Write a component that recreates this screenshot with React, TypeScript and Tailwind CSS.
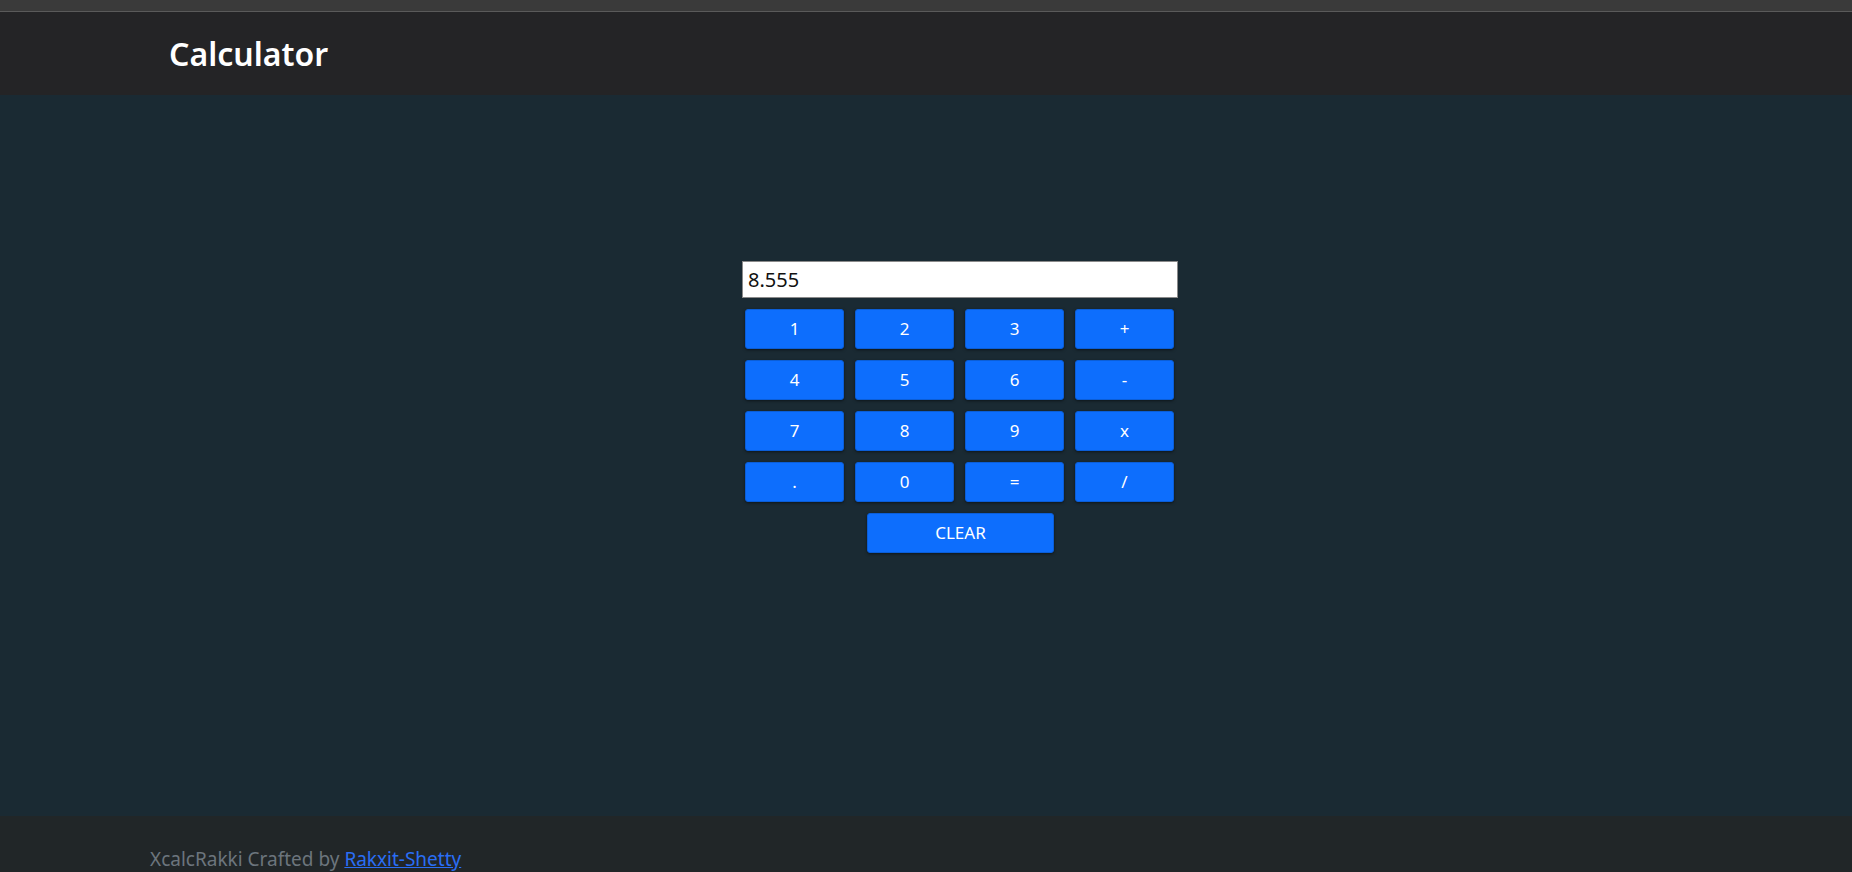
import React from "react";

const keys = ["1", "2", "3", "+", "4", "5", "6", "-", "7", "8", "9", "x", ".", "0", "=", "/"];

export default function App() {
  return (
    <div
      className="flex h-[872px] w-full flex-col overflow-hidden bg-[#1a2a33]"
      style={{ fontFamily: '"Noto Sans", "Open Sans", sans-serif' }}
    >
      <div className="h-[12px] shrink-0 border-b border-[#5a5a5a] bg-[#3a3a3a]" />
      <header className="flex h-[83px] shrink-0 items-center bg-[#242426] pl-[169px]">
        <h1 className="text-[32px] font-semibold leading-none text-white">Calculator</h1>
      </header>
      <main className="flex-1 pl-[742px] pt-[166px]">
        <div className="flex w-[436px] flex-col">
          <div className="flex h-[37px] items-center border border-[#8a8a8a] bg-white pl-[5px] text-[20px] text-[#111]">
            8.555
          </div>
          <div className="mt-[11px] grid grid-cols-4 gap-x-[11px] gap-y-[11px] pl-[3px] pr-[4px]">
            {keys.map((k) => (
              <button
                key={k}
                className="h-[40px] rounded-[3px] border border-[#0b5ed7] bg-[#0d6efd] text-[17px] text-white shadow-[0_1px_3px_rgba(0,0,0,0.5)]"
              >
                {k}
              </button>
            ))}
          </div>
          <div className="mt-[11px] flex justify-center">
            <button className="ml-[1px] h-[40px] w-[187px] rounded-[3px] border border-[#0b5ed7] bg-[#0d6efd] text-[17px] text-white shadow-[0_1px_3px_rgba(0,0,0,0.5)]">
              CLEAR
            </button>
          </div>
        </div>
      </main>
      <footer className="h-[56px] shrink-0 bg-[#212628] pl-[150px] pt-[34px]">
        <p className="text-[19px] leading-none text-[#6c757d]">
          XcalcRakki Crafted by{" "}
          <a href="#" className="text-[#2a6ef5] underline">
            Rakxit-Shetty
          </a>
        </p>
      </footer>
    </div>
  );
}
